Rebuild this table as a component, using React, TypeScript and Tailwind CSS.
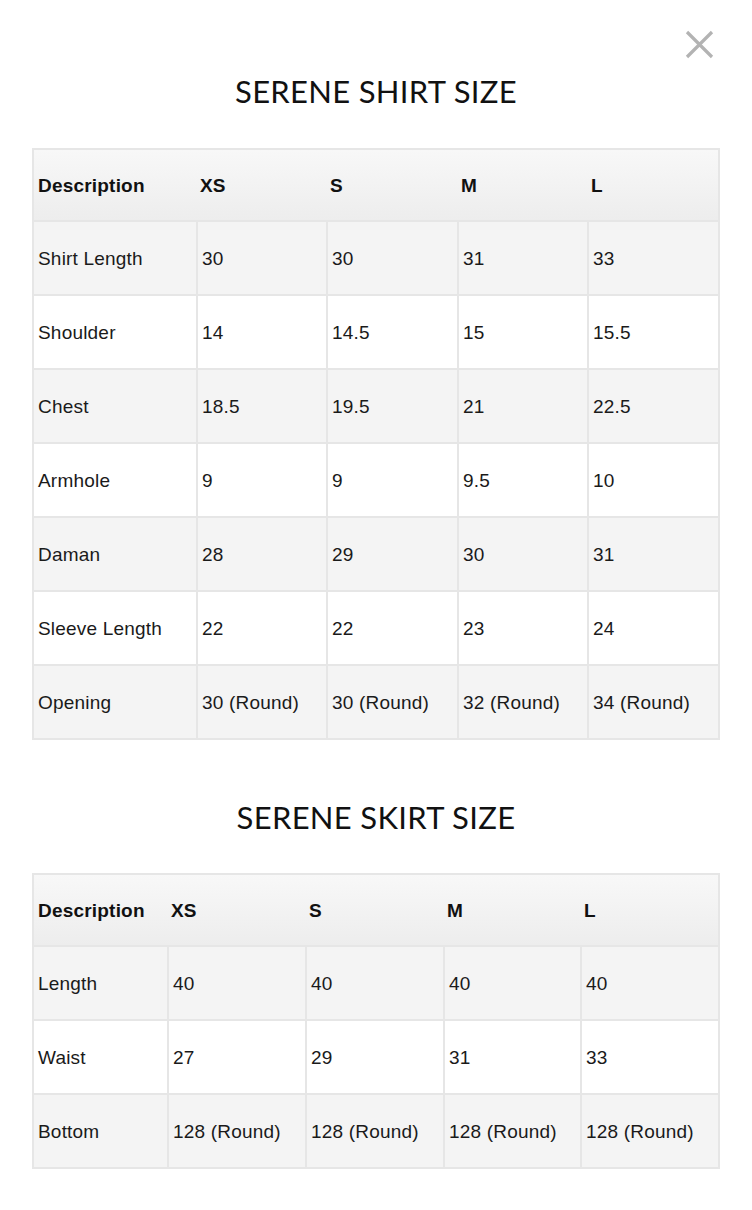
import React from "react";

type TableProps = {
  widths: string[];
  rows: string[][];
};

const headers = ["Description", "XS", "S", "M", "L"];

function SizeTable({ widths, rows }: TableProps) {
  return (
    <div className="mx-[32px] border-2 border-[#e6e6e6]">
      <div className="flex h-[72px] items-center border-b-2 border-[#e6e6e6] bg-gradient-to-b from-[#f8f8f8] to-[#ededed] pt-[2px]">
        {headers.map((h, i) => (
          <div key={h} className={`${widths[i]} pl-[4px] font-bold text-[19px] tracking-[0.2px] text-[#111]`}>
            {h}
          </div>
        ))}
      </div>
      {rows.map((r, ri) => (
        <div
          key={ri}
          className={`flex h-[74px] border-b-2 border-[#e6e6e6] last:h-[72px] last:border-b-0 ${ri % 2 === 0 ? "bg-[#f4f4f4]" : "bg-white"}`}
        >
          {r.map((c, ci) => (
            <div
              key={ci}
              className={`${widths[ci]} flex items-center pl-[4px] pt-[3px] text-[19px] tracking-[0.2px] text-[#1a1a1a] ${ci > 0 ? "border-l-2 border-[#e6e6e6]" : ""}`}
            >
              {c}
            </div>
          ))}
        </div>
      ))}
    </div>
  );
}

export default function App() {
  const shirtWidths = ["w-[162px]", "w-[130px]", "w-[131px]", "w-[130px]", "flex-1"];
  const skirtWidths = ["w-[133px]", "w-[138px]", "w-[138px]", "w-[137px]", "flex-1"];
  const shirtRows = [
    ["Shirt Length", "30", "30", "31", "33"],
    ["Shoulder", "14", "14.5", "15", "15.5"],
    ["Chest", "18.5", "19.5", "21", "22.5"],
    ["Armhole", "9", "9", "9.5", "10"],
    ["Daman", "28", "29", "30", "31"],
    ["Sleeve Length", "22", "22", "23", "24"],
    ["Opening", "30 (Round)", "30 (Round)", "32 (Round)", "34 (Round)"],
  ];
  const skirtRows = [
    ["Length", "40", "40", "40", "40"],
    ["Waist", "27", "29", "31", "33"],
    ["Bottom", "128 (Round)", "128 (Round)", "128 (Round)", "128 (Round)"],
  ];
  return (
    <div
      className="relative min-h-[1210px] w-[752px] bg-white"
      style={{ fontFamily: '"Liberation Sans", Arial, sans-serif' }}
    >
      <button className="absolute left-[684px] top-[29px] h-[31px] w-[31px]" aria-label="Close">
        <svg viewBox="0 0 31 31" width="31" height="31">
          <path d="M3 3 L28 28 M28 3 L3 28" stroke="#b3b3b3" strokeWidth="3.2" strokeLinecap="butt" />
        </svg>
      </button>
      <div className="pt-[72px]">
        <h1
          className="text-center text-[31px] leading-[38px] tracking-[0.3px] text-[#111]"
          style={{ fontFamily: 'Lato, "Open Sans", sans-serif' }}
        >
          SERENE SHIRT SIZE
        </h1>
        <div className="mt-[38px]">
          <SizeTable widths={shirtWidths} rows={shirtRows} />
        </div>
        <h1
          className="mt-[58px] text-center text-[31px] leading-[38px] tracking-[0.3px] text-[#111]"
          style={{ fontFamily: 'Lato, "Open Sans", sans-serif' }}
        >
          SERENE SKIRT SIZE
        </h1>
        <div className="mt-[37px]">
          <SizeTable widths={skirtWidths} rows={skirtRows} />
        </div>
      </div>
    </div>
  );
}
